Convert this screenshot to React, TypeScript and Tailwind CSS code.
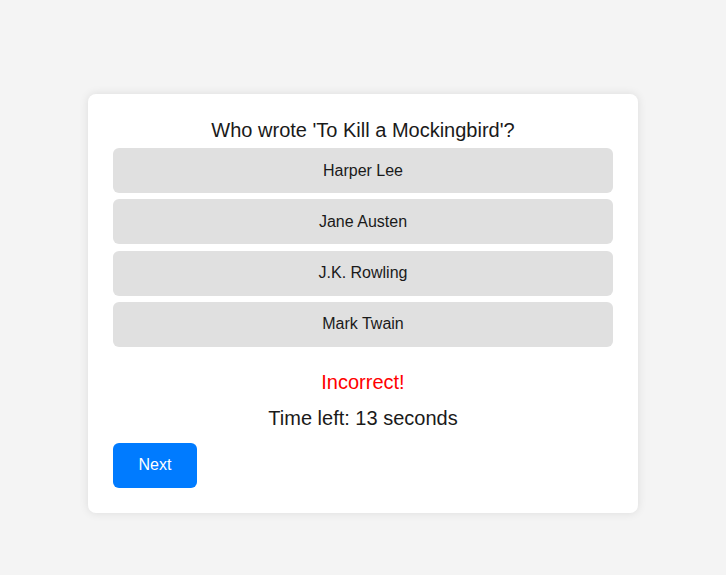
const options = ['Harper Lee', 'Jane Austen', 'J.K. Rowling', 'Mark Twain']

export default function App() {
  return (
    <div
      className="min-h-[575px] bg-[#f4f4f4] pt-[94px]"
      style={{ fontFamily: '"Liberation Sans", Arial, sans-serif' }}
    >
      <div className="mx-auto w-[550px] rounded-lg bg-white px-[25px] pt-[25px] pb-[25px] shadow-[0_0_10px_rgba(0,0,0,0.1)]">
        <h2 className="text-center text-[20px] leading-[23px] text-[#1a1a1a]">
          Who wrote 'To Kill a Mockingbird'?
        </h2>
        <div className="mt-[6px] flex flex-col gap-[6.3px]">
          {options.map((option) => (
            <button
              key={option}
              type="button"
              className="h-[45px] w-full rounded-md bg-[#e0e0e0] text-[16px] text-[#1a1a1a]"
            >
              {option}
            </button>
          ))}
        </div>
        <p className="mt-[24px] text-center text-[20px] leading-[23px] text-[#ff0000]">
          Incorrect!
        </p>
        <p className="mt-[13px] text-center text-[20px] leading-[23px] text-[#1a1a1a]">
          Time left: 13 seconds
        </p>
        <button
          type="button"
          className="mt-[13px] h-[45px] w-[84px] rounded-md bg-[#007bff] text-[16px] text-white"
        >
          Next
        </button>
      </div>
    </div>
  )
}
